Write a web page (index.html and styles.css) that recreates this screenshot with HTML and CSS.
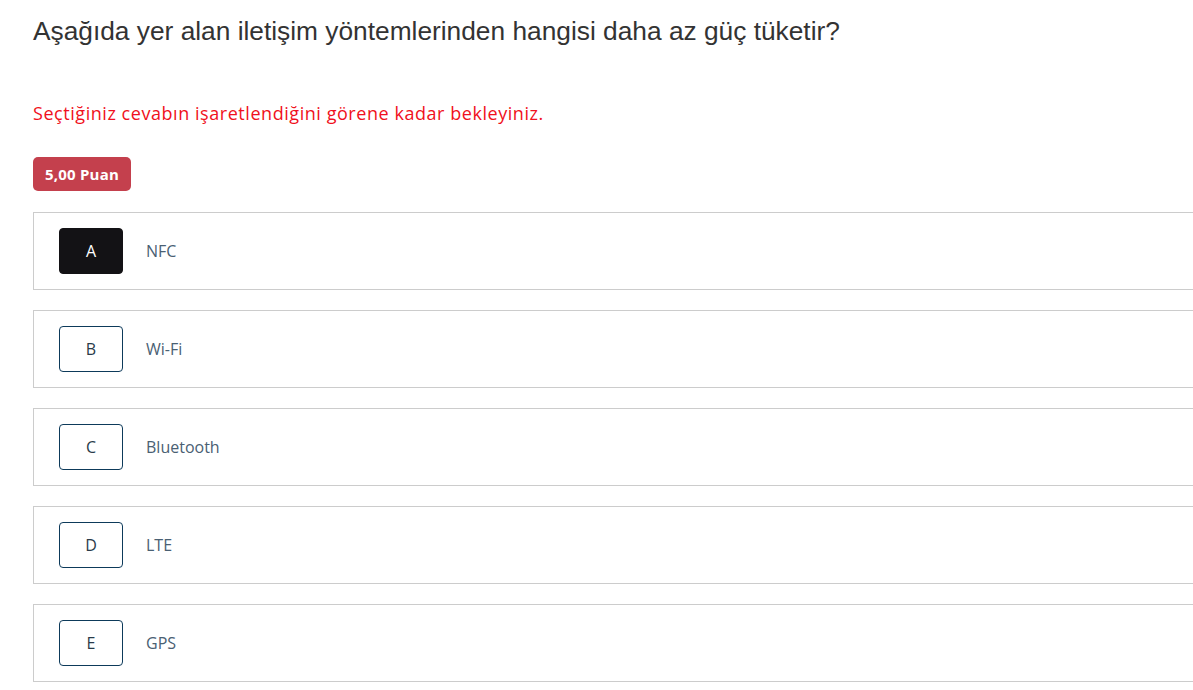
FILE: index.html
```html
<!DOCTYPE html>
<html lang="tr">
<head>
<meta charset="utf-8">
<link rel="stylesheet" href="styles.css">
</head>
<body>
<main class="page">
  <h1 class="question">Aşağıda yer alan iletişim yöntemlerinden hangisi daha az güç tüketir?</h1>
  <p class="warning">Seçtiğiniz cevabın işaretlendiğini görene kadar bekleyiniz.</p>
  <span class="badge">5,00 Puan</span>
  <ul class="options">
    <li class="option"><span class="letter selected">A</span><span class="label">NFC</span></li>
    <li class="option"><span class="letter">B</span><span class="label">Wi-Fi</span></li>
    <li class="option"><span class="letter">C</span><span class="label">Bluetooth</span></li>
    <li class="option"><span class="letter">D</span><span class="label">LTE</span></li>
    <li class="option"><span class="letter">E</span><span class="label">GPS</span></li>
  </ul>
</main>
</body>
</html>
```
FILE: styles.css
```css
html, body {
  margin: 0;
  padding: 0;
  background: #fff;
  overflow: hidden;
}
.page {
  padding: 14px 0 0 33px;
  width: 1200px;
  font-family: "Open Sans", "Noto Sans", sans-serif;
}
.question {
  margin: 0;
  font-family: "Liberation Sans", Arial, sans-serif;
  font-weight: 400;
  font-size: 26.3px;
  line-height: 34px;
  color: #333;
}
.warning {
  margin: 53px 0 0;
  font-size: 18px;
  line-height: 24px;
  letter-spacing: 0.55px;
  color: #f01020;
}
.badge {
  display: flex;
  align-items: center;
  justify-content: center;
  margin-top: 32px;
  width: 98px;
  height: 34px;
  box-sizing: border-box;
  border-radius: 5px;
  background: #c4404d;
  color: #fff;
  font-weight: 700;
  font-size: 15px;
  letter-spacing: 0.2px;
}
.options {
  list-style: none;
  margin: 21px 0 0;
  padding: 0;
  display: flex;
  flex-direction: column;
  gap: 20px;
}
.option {
  display: flex;
  align-items: center;
  height: 78px;
  box-sizing: border-box;
  border: 1px solid #cccccc;
  padding-left: 25px;
}
.letter {
  display: flex;
  align-items: center;
  justify-content: center;
  width: 64px;
  height: 46px;
  box-sizing: border-box;
  border: 1px solid #0d3a5a;
  border-radius: 4px;
  font-size: 16px;
  color: #2a3b4a;
}
.letter.selected {
  background: #131215;
  border-color: #131215;
  color: #fff;
}
.label {
  margin-left: 23px;
  font-size: 16px;
  color: #4a6073;
}
```
